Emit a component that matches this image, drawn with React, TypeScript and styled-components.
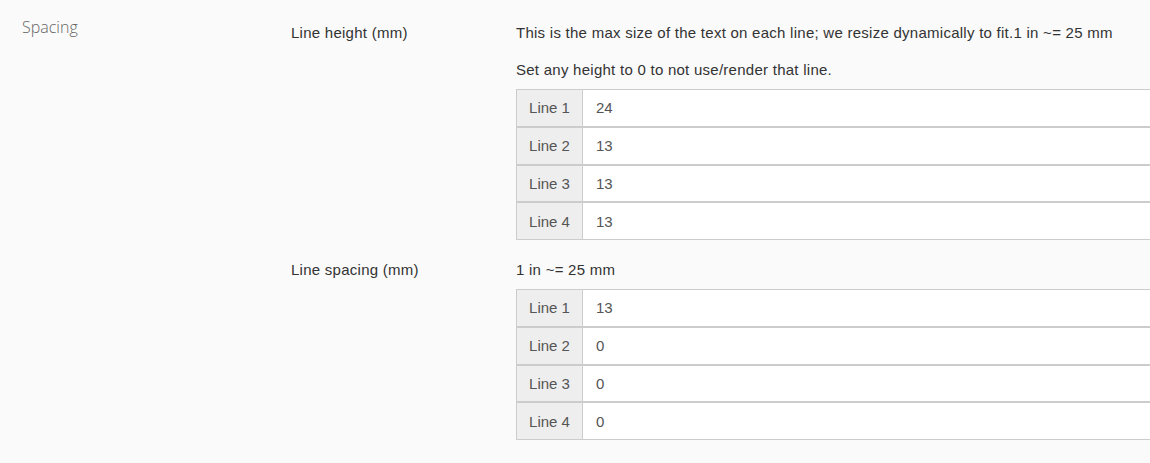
import React from 'react';
import styled, { createGlobalStyle } from 'styled-components';

const GlobalStyle = createGlobalStyle`
  html, body {
    margin: 0;
    padding: 0;
    background: #fafafa;
  }
  body {
    font-family: "Liberation Sans", Arial, sans-serif;
  }
`;

interface ILineField {
  label: string;
  hints: string[];
  values: number[];
}

const fields: ILineField[] = [
  {
    label: 'Line height (mm)',
    hints: [
      'This is the max size of the text on each line; we resize dynamically to fit.1 in ~= 25 mm',
      'Set any height to 0 to not use/render that line.'
    ],
    values: [24, 13, 13, 13]
  },
  {
    label: 'Line spacing (mm)',
    hints: ['1 in ~= 25 mm'],
    values: [13, 0, 0, 0]
  }
];

const App = () => {
  return (
    <>
      <GlobalStyle />
      <Section>
        <SectionTitle>Spacing</SectionTitle>
        <Fields>
          {fields.map(field => (
            <FieldRow key={field.label}>
              <FieldLabel>{field.label}</FieldLabel>
              <FieldBody>
                {field.hints.map((hint, index) => (
                  <Hint key={index}>{hint}</Hint>
                ))}
                <LineTable>
                  {field.values.map((value, index) => (
                    <LineRow key={index}>
                      <LineAddon>{`Line ${index + 1}`}</LineAddon>
                      <LineInput defaultValue={value} />
                    </LineRow>
                  ))}
                </LineTable>
              </FieldBody>
            </FieldRow>
          ))}
        </Fields>
      </Section>
    </>
  );
};

export default App;

const Section = styled.section`
  display: grid;
  grid-template-columns: 269px 1fr;
  padding: 0 0 0 22px;
  min-height: 463px;
  box-sizing: border-box;
  overflow: hidden;
`;

const SectionTitle = styled.h3`
  margin: 17px 0 0;
  font-family: 'Open Sans', sans-serif;
  font-weight: 300;
  font-size: 16px;
  line-height: 20px;
  color: #666;
`;

const Fields = styled.div`
  display: flex;
  flex-direction: column;
  row-gap: 20px;
  padding-top: 23px;
`;

const FieldRow = styled.div`
  display: grid;
  grid-template-columns: 225px 1fr;
`;

const FieldLabel = styled.div`
  font-size: 15px;
  letter-spacing: 0.26px;
  line-height: 20px;
  color: #333;
`;

const FieldBody = styled.div`
  display: flex;
  flex-direction: column;
  min-width: 0;
`;

const Hint = styled.p`
  margin: 0 0 17px;
  font-size: 15px;
  letter-spacing: 0.26px;
  line-height: 20px;
  color: #333;
  white-space: nowrap;
  &:last-of-type {
    margin-bottom: 9px;
  }
`;

const LineTable = styled.div`
  display: flex;
  flex-direction: column;
  width: 700px;
`;

const LineRow = styled.div`
  display: flex;
  height: 37.75px;
  box-sizing: border-box;
  border: 1px solid #ccc;
  background: #fff;
`;

const LineAddon = styled.span`
  flex: 0 0 65px;
  display: flex;
  align-items: center;
  justify-content: center;
  background: #eee;
  border-right: 1px solid #ccc;
  font-size: 15px;
  color: #555;
`;

const LineInput = styled.input`
  flex: 1;
  border: 0;
  outline: none;
  padding: 0 13px;
  background: transparent;
  font-family: "Liberation Sans", Arial, sans-serif;
  font-size: 15px;
  color: #555;
`;
